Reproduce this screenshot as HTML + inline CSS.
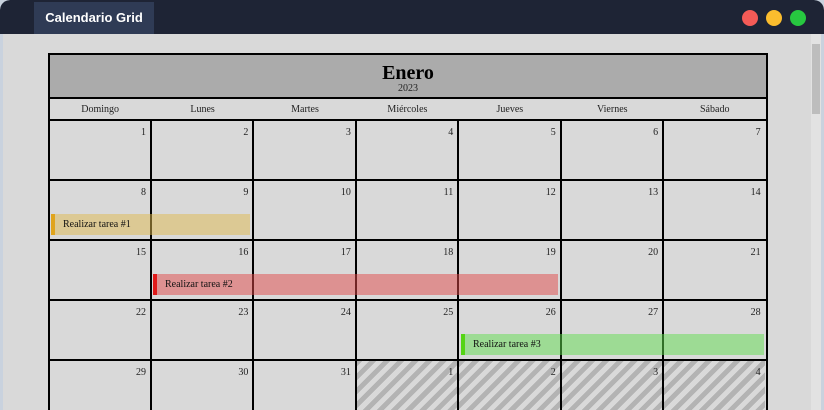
<!DOCTYPE html>
<html><head><meta charset="utf-8"><style>
*{margin:0;padding:0;box-sizing:border-box}
html,body{width:824px;height:410px;overflow:hidden;background:#c9d2de}
.win{position:absolute;left:0;top:0;width:824px;height:410px;background:#c9d2de;border-radius:10px 10px 0 0;overflow:hidden}
.bar{position:absolute;left:0;top:0;width:824px;height:34px;background:#1e2435;border-radius:10px 10px 0 0}
.tab{position:absolute;left:34px;top:2px;width:120px;height:32px;background:#2f3b55;color:#fff;font:bold 13px "Liberation Sans",sans-serif;line-height:32px;text-align:center}
.dot{position:absolute;top:10px;width:16px;height:16px;border-radius:50%}
.body{position:absolute;left:3px;top:34px;width:818px;height:376px;background:#d9d9d9}
.sb{position:absolute;left:811px;top:34px;width:10px;height:376px;background:#e2e2e2}
.th{position:absolute;left:812px;top:44px;width:8px;height:70px;background:#bdbdbd}
.cal{position:absolute;left:48px;top:53px;width:720px;height:360px;border:2px solid #000;border-bottom:none;font-family:"Liberation Serif",serif;color:#222}
.hd{position:absolute;left:0;top:0;width:716px;height:44px;background:#ababab;border-bottom:2px solid #000;text-align:center}
.hd b{display:block;font-size:20px;color:#000;margin-top:8px;line-height:20px}
.hd span{font-size:10px;display:block;line-height:12px}
.dn{position:absolute;top:44px;height:22px;font-size:10px;line-height:22px;text-align:center;width:102.3px}
.l{position:absolute;background:#000}
.n{position:absolute;font-size:10px;text-align:right;width:96px}
.h{position:absolute;background:repeating-linear-gradient(135deg,#b3b3b3 0 5px,#d9d9d9 5px 10px)}
.ev{position:absolute;height:21px;font-size:10px;line-height:21px;padding-left:8px;color:#111}
</style></head><body><div class="win">
<div class="bar"></div><div class="tab">Calendario Grid</div>
<div class="dot" style="left:742px;background:#f55b57"></div>
<div class="dot" style="left:766px;background:#fbbd2e"></div>
<div class="dot" style="left:790px;background:#27c840"></div>
<div class="body"></div><div class="sb"></div><div class="th"></div>
<div class="cal">
<div class="hd"><b>Enero</b><span>2023</span></div>
<div id="g"></div>
</div>
</div>
<script>
var g=document.getElementById('g'),h='';
var cw=102.43,names=['Domingo','Lunes','Martes','Miércoles','Jueves','Viernes','Sábado'];
for(var i=0;i<7;i++)h+='<div class="dn" style="left:'+(i*cw-1)+'px">'+names[i]+'</div>';
for(var i=3;i<7;i++)h+='<div class="h" style="left:'+(i*cw-2)+'px;top:306px;width:'+cw+'px;height:60px"></div>';
for(var r=0;r<5;r++){for(var c=0;c<7;c++){var d=r*7+c+1;if(d>31)d-=31;
h+='<div class="n" style="left:'+(c*cw)+'px;top:'+(72+r*60)+'px">'+d+'</div>';}}
h+='<div class="l" style="left:0;top:64px;width:716px;height:2px"></div>';
for(var r=1;r<5;r++)h+='<div class="l" style="left:0;top:'+(64+r*60)+'px;width:716px;height:2px"></div>';
for(var c=1;c<7;c++)h+='<div class="l" style="left:'+Math.round(c*cw-2.4)+'px;top:66px;width:2px;height:300px"></div>';
h+='<div class="ev" style="left:1px;top:159px;width:199px;background:rgba(223,185,79,.5);border-left:4px solid #e0a41c">Realizar tarea #1</div>';
h+='<div class="ev" style="left:103px;top:219px;width:405px;background:rgba(225,73,73,.5);border-left:4px solid #e01a1a">Realizar tarea #2</div>';
h+='<div class="ev" style="left:411px;top:279px;width:303px;background:rgba(97,221,79,.5);border-left:4px solid #55d414">Realizar tarea #3</div>';
g.innerHTML=h;
</script>
</body></html>
